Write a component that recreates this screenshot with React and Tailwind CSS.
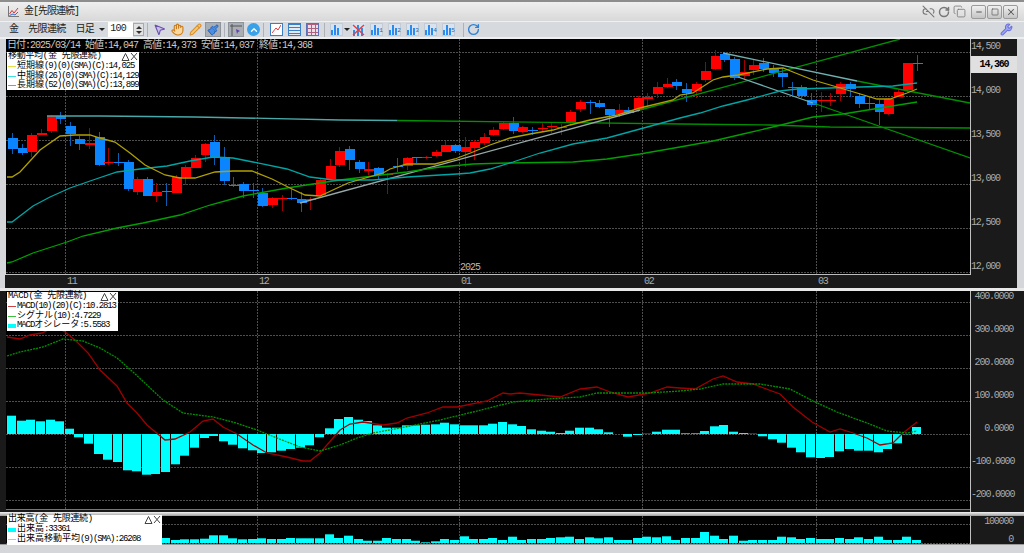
import { Hand, Pencil, Wrench, Copy, RotateCw, Minus, Square, X, Link2Off, ChevronUp, MousePointer2, Paintbrush } from "lucide-react";

const FONT = "font-['Liberation_Mono','Noto_Sans_CJK_JP',monospace]";

const barX = (i) => 12 + i * 9.628;

// [colour, body top, body bottom, wick top, wick bottom] in page pixels
const CANDLES = [
  ["b",138,149,133,154],["b",148,153,144,155],["r",135,152,133,157],["r",133,135,129,135],["r",116,131,115,133],
  ["b",116,119,112,124],["b",126,134,122,146],["b",139,144,136,150],["r",143,145,128,149],["b",137,165,132,166],
  ["r",162,163,148,165],["b",162,163,153,166],["b",162,189,160,191],["r",179,192,177,195],["b",179,196,177,196],
  ["r",192,196,183,202],["b",191,192,183,206],["r",177,193,175,193],["r",167,177,165,185],["r",158,168,155,168],
  ["r",144,155,143,162],["b",142,157,135,165],["b",157,181,147,185],["b",185,186,177,187],["b",184,191,182,198],
  ["b",190,191,183,198],["b",193,206,188,207],["r",198,205,197,208],["r",198,199,195,211],["b",198,199,189,200],
  ["b",199,203,192,212],["r",199,200,197,210],["r",180,195,179,197],["r",166,179,159,180],["r",151,165,147,167],
  ["b",149,160,146,170],["b",162,169,160,173],["r",169,171,162,175],["b",168,175,167,180],["r",174,175,173,194],
  ["b",166,167,158,172],["r",158,166,157,170],["b",157,158,157,163],["r",157,158,156,159],["r",152,156,150,157],
  ["r",145,152,141,152],["b",145,151,144,153],["r",147,152,137,167],["r",142,148,140,160],["r",137,143,133,145],
  ["r",130,135,127,136],["r",123,129,122,130],["b",123,131,117,134],["r",127,132,126,133],["b",130,131,127,135],
  ["r",128,129,123,132],["r",126,127,123,133],["r",127,128,124,135],["r",112,123,110,125],["r",102,109,100,112],
  ["b",102,103,100,114],["b",103,107,100,108],["b",109,115,109,127],["r",110,114,104,117],["b",110,113,107,114],
  ["r",98,110,96,112],["r",97,99,93,106],["r",87,94,82,98],["r",84,87,78,88],["b",82,86,79,90],
  ["b",89,93,83,102],["r",84,91,82,98],["r",71,80,62,82],["r",56,69,50,70],["b",54,60,52,62],
  ["b",59,78,57,80],["r",72,76,60,80],["r",65,70,59,75],["b",63,69,58,72],["b",69,73,65,77],
  ["b",73,77,68,87],["b",87,88,82,95],["b",87,96,85,98],["b",100,105,93,107],["r",100,101,92,112],
  ["r",100,101,93,106],["r",84,94,82,101],["b",84,89,82,97],["b",96,104,93,108],["b",103,104,97,109],
  ["b",104,112,100,125],["r",99,114,98,115],["r",92,97,90,97],["r",63,90,63,92],["b",63,64,55,71],
];

const MA_SHORT = "7,177 12,177 20,172 40,150 60,136 75,135 90,135 100,138 115,142 130,153 145,165 165,175 180,178 195,178 215,172 233,171 252,171 272,179 290,188 305,195 320,196 335,189 348,183 383,173 390,169 407,164 420,164 435,164 455,159 473,152 490,145 510,138 530,134 553,130 570,125 590,120 617,115 640,108 673,100 680,95 693,93 713,80 723,77 738,75 767,69 783,68 793,72 813,80 837,87 857,93 877,99 890,99 907,93 917,89";
const MA_MID = "7,222 12,222 33,206 50,197 70,188 93,180 117,172 140,169 167,166 190,161 213,157 233,158 253,162 287,169 310,177 333,180 373,180 407,177 440,175 457,174 470,173 490,169 513,162 540,153 573,144 607,138 640,129 680,118 700,113 723,106 747,100 780,91 797,89 830,88 860,87 893,86 917,83";
const MA_LONG = "7,263 12,262 33,253 67,242 83,236 117,228 143,223 180,215 210,205 243,196 287,188 313,184 340,180 373,176 407,172 440,167 473,164 507,163 573,162 607,159 640,154 680,147 713,141 743,134 777,126 813,117 843,114 880,108 917,102";

const MACD_LINE = "7,337 20,339 30,335 42,333 50,329 58,328 65,332 75,340 88,353 100,370 117,386 127,403 137,413 147,425 165,440 175,439 190,432 203,421 213,419 223,427 237,434 253,445 267,453 287,457 303,461 310,461 320,453 333,438 340,430 350,424 363,422 383,425 397,423 407,418 427,413 443,407 457,407 487,401 503,393 510,394 520,393 540,395 560,397 580,389 597,387 610,392 628,397 650,393 667,387 680,388 695,389 713,379 723,376 737,382 753,384 780,394 793,407 812,422 830,432 840,429 853,433 867,438 880,445 893,443 903,433 917,422";
const MACD_SIGNAL = "7,356 20,352 43,347 63,339 83,341 100,348 117,358 133,372 163,400 183,413 213,417 233,422 257,430 277,438 300,447 320,451 340,445 357,438 373,433 400,428 440,420 473,412 513,402 547,399 580,397 597,393 627,393 647,393 680,391 700,389 723,384 760,384 790,389 813,401 837,412 867,423 887,431 907,433 917,431";

const MACD_BARS = [18.3,13.3,14.3,12.7,14.3,12.7,5.3,-3.3,-9.7,-20,-25.7,-28,-36.3,-37.3,-40.7,-40,-38,-30.3,-21.7,-13.7,-4,-2,-7.3,-10.7,-14.3,-16.3,-19,-18.3,-16.7,-15,-13.7,-11.3,-3.3,5.7,15,17,14.3,13,8.7,6.3,6.3,8.7,8.7,9.3,9.7,11.3,9.7,8.7,8.7,8.7,10.3,12,9.7,8,4.7,3.3,2.3,1,3.3,6.3,6.3,4.7,1.7,0,-2.7,-1,0.3,2.3,4.3,4.3,0.7,0.7,3,7.7,9,2.3,1,0.3,-2.3,-5.3,-8.7,-13.7,-18.3,-23.3,-24,-23,-17.3,-15,-16.7,-16.7,-18.3,-15,-9.3,-0.3,7];

const VOLUME = [4,4,4,4,4,4,4,4,4,4,4,4,4,4,4,4,5,3,3.7,3.7,4.3,7.7,7.7,4.7,3.7,4,4.7,4,4,5,4.7,4.7,4.7,8.7,5,7.3,4,2.3,2.3,5,4,4,2.3,0.7,1.7,4,3,6.7,4,4,5,3,6.3,3,4,4,5,5.7,6.3,4,5.7,4.7,5.7,3,3,5,6.3,5.7,6.7,3,5,5,11,7.3,4,7.3,2.3,3,3,3,6.3,5.7,4,5,4,4,5,4,5.7,4,6.3,3,3,6.3,3];

const MONTHS = [65, 257, 459, 642, 816];

function Grid({ ys, top, bottom }) {
  return (
    <g stroke="#4e4e4e" strokeWidth="1" strokeDasharray="2 1">
      {ys.map((y) => <line key={y} x1="6" x2="970" y1={y + 0.5} y2={y + 0.5} />)}
      {MONTHS.map((x) => <line key={x} x1={x + 0.5} x2={x + 0.5} y1={top} y2={bottom} />)}
    </g>
  );
}

function PriceChart() {
  return (
    <svg className="block w-[964px] h-[235px]" viewBox="6 39 964 235">
      <Grid ys={[52, 96, 140, 184, 228, 272]} top={39} bottom={274} />
      {CANDLES.map(([c, t, b, wt, wb], i) => {
        const x = Math.round(barX(i));
        return (
          <g key={i}>
            <line x1={x + 0.5} x2={x + 0.5} y1={wt} y2={wb} stroke={c === "r" ? "#a00000" : "#0a5fb0"} />
            <rect x={x - 4} y={t} width="10" height={b - t} fill={c === "r" ? "#ff0000" : "#0a84ff"} />
          </g>
        );
      })}
      <g fill="none" strokeWidth="1.3">
        <polyline points="47,116 100,116 195,117 340,120 397,120.5" stroke="#4aa8a8" />
        <polyline points="397,120.5 573,122.7 680,124 770,125 830,127 970,128" stroke="#009000" />
        <polyline points="300,203 640,110" stroke="#98a8a8" />
        <polyline points="640,110 900,39" stroke="#009000" />
        <polyline points="723,53 857,81" stroke="#70b0b0" />
        <polyline points="857,81 970,103" stroke="#009000" />
        <polyline points="738,77 813,103" stroke="#70b0b0" />
        <polyline points="813,103 970,158" stroke="#009000" />
        <polyline points={MA_LONG} stroke="#00a000" />
        <polyline points={MA_MID} stroke="#00a5a5" />
        <polyline points={MA_SHORT} stroke="#b0a000" />
      </g>
    </svg>
  );
}

function MacdChart() {
  return (
    <svg className="block w-[964px] h-[218px]" viewBox="6 291 964 218">
      <Grid ys={[302, 335, 368, 401, 434, 467, 500]} top={291} bottom={509} />
      {MACD_BARS.map((v, i) => (
        <rect key={i} x={Math.round(barX(i)) - 5} y={v > 0 ? 434 - v : 434} width="9" height={Math.abs(v)} fill="#00ffff" />
      ))}
      <polyline points={MACD_LINE} fill="none" stroke="#a00000" strokeWidth="1.3" />
      <polyline points={MACD_SIGNAL} fill="none" stroke="#009000" strokeWidth="1.3" strokeDasharray="2 1" />
    </svg>
  );
}

function VolumeChart() {
  return (
    <svg className="block w-[964px] h-[28px]" viewBox="6 516 964 28">
      <Grid ys={[524, 543]} top={516} bottom={544} />
      {VOLUME.map((v, i) => (
        <rect key={i} x={Math.round(barX(i)) - 5} y={543 - v} width="9" height={v} fill="#00ffff" />
      ))}
    </svg>
  );
}

function LegendHead({ title }) {
  return (
    <div className="flex items-start h-[10px] text-[9px] tracking-[-0.3px] leading-[9px] whitespace-nowrap">
      <span>{title}</span>
      <svg width="17" height="9" viewBox="0 0 17 9" fill="none" stroke="#444" className="ml-auto">
        <path d="M1 8.5h7L4.5 1.5z" />
        <path d="M10 1l6 7M16 1l-6 7" />
      </svg>
    </div>
  );
}

const Narrow = ({ children }) => <span className="tracking-[-1.1px]">{children}</span>;

function LegendRow({ color, thick, children }) {
  return (
    <div className="flex items-center h-[9.6px] text-[9px] leading-[9.6px] whitespace-nowrap">
      <span
        className={`w-[8px] mr-[1px] shrink-0 ${thick ? "h-[4px]" : "h-[1px]"}`}
        style={{ background: color }}
      />
      <span>{children}</span>
    </div>
  );
}

function IconFrame({ children, active }) {
  return (
    <span className={`flex items-center justify-center w-[16px] h-[15px] shrink-0 ${active ? "bg-[#a9adb4] border border-[#8f949b]" : ""}`}>
      {children}
    </span>
  );
}

function BarIcon({ n }) {
  return (
    <span className="relative flex items-center justify-center w-[13px] h-[13px] shrink-0 bg-[#d9e3ef] border border-[#c3cbd6]">
      <svg width="11" height="11" viewBox="0 0 11 11" fill="#2a8cf0">
        <rect x="0" y="6" width="2" height="5" />
        <rect x="3" y="1" width="2" height="10" />
        <rect x="6" y="4" width="2" height="7" />
      </svg>
      <span className="absolute right-0 bottom-0 text-[6px] leading-[8px] text-[#2060b0]">{n}</span>
    </span>
  );
}

function Sep({ className = "" }) {
  return <span className={`w-[1px] h-[14px] bg-[#aeb2b8] mx-[3px] shrink-0 ${className}`} />;
}

function WinButton({ children }) {
  return (
    <span className="flex items-center justify-center w-[15px] h-[14px] rounded-[2px] border border-[#9a9a9a] bg-gradient-to-b from-[#f0f0f0] to-[#c4c4c4] text-[#555]">
      {children}
    </span>
  );
}

function TitleBar() {
  return (
    <div className="h-[21px] shrink-0 flex items-center pl-[8px] pr-[6px] border-t-2 border-[#8d8d8d] bg-gradient-to-b from-[#efefef] to-[#d8d8d8]">
      <svg width="11" height="11" viewBox="0 0 11 11" fill="none" className="mr-[5px]">
        <path d="M0.5 0v10.5H11" stroke="#777" />
        <path d="M1.5 8L4 4.5 6 7l4-5" stroke="#e03030" />
        <path d="M1.5 9.5L5 8l2 1 3-3" stroke="#3070e0" />
      </svg>
      <span className="text-[10px] tracking-[-1px] text-[#222]">金[先限連続]</span>
      <div className="ml-auto flex items-center text-[#777]">
        <Link2Off size={13} strokeWidth={2} />
        <RotateCw size={12} strokeWidth={3} className="ml-[3px]" />
        <Copy size={13} strokeWidth={1.5} className="ml-[3px] mr-[5px]" />
        <WinButton><Minus size={8} strokeWidth={3} /></WinButton>
        <span className="w-[1px]" />
        <WinButton><Square size={8} strokeWidth={2} /></WinButton>
        <span className="w-[1px]" />
        <WinButton><X size={10} strokeWidth={2.5} /></WinButton>
      </div>
    </div>
  );
}

function Toolbar() {
  return (
    <div className="h-[18px] shrink-0 flex items-center pl-[9px] pr-[11px] bg-[#d6d9de] border-t border-[#f0f0f0] border-b-2 border-b-[#eceef0] text-[10px] tracking-[-0.7px] text-[#222]">
      <span>金</span>
      <span className="ml-[10px]">先限連続</span>
      <span className="ml-[10px]">日足</span>
      <span className="ml-[5px] w-0 h-0 border-x-[3px] border-x-transparent border-t-[3px] border-t-[#222]" />
      <span className="ml-[3px] w-[25px] h-[15px] bg-white pl-[2px] leading-[14px]">100</span>
      <span className="w-[11px] h-[13px] flex flex-col items-center justify-center gap-[2px] bg-[#e2e2e2] border border-[#aaa]">
        <span className="w-0 h-0 border-x-[3px] border-x-transparent border-b-[3px] border-b-[#333]" />
        <span className="w-0 h-0 border-x-[3px] border-x-transparent border-t-[3px] border-t-[#333]" />
      </span>
      <Sep />
      <div className="flex items-center gap-[2px]">
        <IconFrame><MousePointer2 size={13} className="text-[#6a50b0] fill-[#c8c0e8]" /></IconFrame>
        <IconFrame><Hand size={13} className="text-[#c87818] fill-[#f8d8a0]" /></IconFrame>
        <IconFrame><Pencil size={13} className="text-[#d89030] fill-[#f8c870]" /></IconFrame>
        <IconFrame active><Paintbrush size={12} className="text-[#2060c0] fill-[#4a90e0]" /></IconFrame>
      </div>
      <Sep />
      <IconFrame active>
        <svg width="12" height="12" viewBox="0 0 12 12" fill="none">
          <path d="M2 0v12M0 2h12" stroke="#555" />
          <path d="M6 5l4 2-2 1-1 2z" fill="#6040b0" />
        </svg>
      </IconFrame>
      <span className="ml-[3px] flex items-center justify-center w-[13px] h-[13px] rounded-full bg-[#3aa0e8] text-white">
        <ChevronUp size={10} strokeWidth={3} />
      </span>
      <Sep />
      <div className="ml-[3px] flex items-center gap-[5px]">
        <span className="w-[13px] h-[13px] bg-white border border-[#3a80c8] flex items-center justify-center">
          <svg width="9" height="9" viewBox="0 0 9 9" fill="none"><path d="M0 8L4 3l2 2 3-5" stroke="#e04040" /></svg>
        </span>
        <span className="w-[13px] h-[13px] bg-[#e4e8f0] border border-[#3a80c8] bg-[linear-gradient(#3a80c8_1px,transparent_1px)] bg-[length:100%_3px]" />
        <span className="w-[13px] h-[13px] bg-[#e8e0e4] border border-[#5a70b8] bg-[linear-gradient(#b06080_1px,transparent_1px),linear-gradient(90deg,#b06080_1px,transparent_1px)] bg-[length:4px_4px]" />
      </div>
      <Sep className="ml-[5px] mr-[5px]" />
      <BarIcon n="" />
      <span className="ml-[1px] w-0 h-0 border-x-[3px] border-x-transparent border-t-[3px] border-t-[#222]" />
      <span className="relative ml-[2px] w-[13px] h-[13px] shrink-0 bg-[#d9e3ef]">
        <svg width="13" height="13" viewBox="0 0 13 13" fill="#2a8cf0">
          <rect x="1" y="7" width="2" height="6" />
          <rect x="5" y="2" width="2" height="11" />
          <rect x="9" y="5" width="2" height="8" />
          <path d="M1 2l11 10M12 2L1 12" stroke="#e84040" strokeWidth="1.5" />
        </svg>
      </span>
      <div className="ml-[5px] flex items-center gap-[5px]">
        {[1, 2, 3, 4, 5].map((n) => <BarIcon key={n} n={n} />)}
      </div>
      <Sep className="ml-[8px]" />
      <span className="text-[#2a80d8]">
        <RotateCw size={13} strokeWidth={2.5} />
      </span>
      <Wrench size={13} strokeWidth={2} className="ml-auto text-[#6a70e0] fill-[#a0a8f0]" />
    </div>
  );
}

export default function App() {
  return (
    <div className={`relative w-[1024px] h-[553px] overflow-hidden flex flex-col bg-[#d4d6da] ${FONT}`}>
      <TitleBar />
      <Toolbar />

      {/* price pane */}
      <div className="flex pl-[6px] pr-[7px] h-[236px] shrink-0">
        <div className="relative w-[964px] bg-black border-b border-[#bdbdbd]">
          <PriceChart />
          <div className="absolute left-[1px] top-0 h-[13px] leading-[13px] text-[10px] tracking-[-1px] text-[#c8c8c8] whitespace-nowrap">
            日付:2025/03/14 始値:14,047 高値:14,373 安値:14,037 終値:14,368
          </div>
          <div className="absolute left-[1px] top-[13px] w-[132px] h-[38px] bg-white text-black px-[1px] leading-none">
            <LegendHead title="移動平均(金 先限連続)" />
            <LegendRow color="#e8e040">短期線<Narrow>(9)(0)(SMA)(C):14,025</Narrow></LegendRow>
            <LegendRow color="#40e0e0">中期線<Narrow>(26)(0)(SMA)(C):14,129</Narrow></LegendRow>
            <LegendRow color="#30e030">長期線<Narrow>(52)(0)(SMA)(C):13,899</Narrow></LegendRow>
          </div>
          <span className="absolute left-[454px] top-[223px] text-[10px] tracking-[-1px] leading-[12px] text-[#bbb]">2025</span>
        </div>
        <div className="relative w-[47px] bg-[#1a1a1a] border-l border-[#c0c0c0] text-[10px] tracking-[-1.2px] text-[#aaa] pt-[1px]">
          {["14,500", "14,000", "13,500", "13,000", "12,500", "12,000"].map((p) => (
            <div key={p} className="h-[44px] leading-[13px]">{p}</div>
          ))}
          <div className="absolute inset-x-0 top-[17px] h-[17px] bg-[#e0e0e0] text-black font-bold text-center leading-[17px]">14,360</div>
        </div>
      </div>

      {/* date axis */}
      <div className="flex pl-[5px] pr-[7px] h-[13px] shrink-0 bg-[#d4d6da]">
        <div className="flex-1 flex bg-[#1a1a1a] text-[10px] tracking-[-1.2px] leading-[13px] text-[#aaa]">
          <span className="w-[61px]" />
          <span className="w-[192px] pl-[1px]">11</span>
          <span className="w-[202px] pl-[1px]">12</span>
          <span className="w-[183px] pl-[1px]">01</span>
          <span className="w-[174px] pl-[1px]">02</span>
          <span className="pl-[1px]">03</span>
        </div>
      </div>
      <div className="h-[3px] shrink-0 bg-[#e8e8e8]" />

      {/* macd pane */}
      <div className="flex pl-[6px] pr-[7px] h-[221px] shrink-0 bg-[#1a1a1a]">
        <div className="relative w-[964px] h-[219px] bg-black border-b border-[#777]">
          <MacdChart />
          <div className="absolute left-[1px] top-[1px] w-[111px] h-[39px] bg-white text-black px-[1px] leading-none">
            <LegendHead title="MACD(金 先限連続)" />
            <LegendRow color="#d04040"><Narrow>MACD(10)(20)(C):10.2813</Narrow></LegendRow>
            <LegendRow color="#40c040">シグナル<Narrow>(10):4.7229</Narrow></LegendRow>
            <LegendRow color="#00ffff" thick><Narrow>MACD</Narrow>オシレータ<Narrow>:5.5583</Narrow></LegendRow>
          </div>
        </div>
        <div className="w-[47px] border-l border-[#c0c0c0] text-[10px] tracking-[-1.2px] text-[#aaa] text-right pr-[4px]">
          {["400.0000", "300.0000", "200.0000", "100.0000", "0.0000", "-100.0000", "-200.0000"].map((v) => (
            <div key={v} className="h-[33px] leading-[11px]">{v}</div>
          ))}
        </div>
      </div>
      <div className="h-[4px] shrink-0 bg-gradient-to-b from-[#f4f4f4] to-[#9c9c9c]" />

      {/* volume pane */}
      <div className="flex pl-[6px] pr-[7px] h-[29px] shrink-0 bg-[#1a1a1a] border-b border-[#9a9a9a]">
        <div className="relative w-[964px] bg-black">
          <VolumeChart />
          <div className="absolute left-[1px] top-[-1px] w-[155px] h-[30px] bg-white text-black px-[1px] leading-none">
            <LegendHead title="出来高(金 先限連続)" />
            <LegendRow color="#00ffff" thick>出来高<Narrow>:33361</Narrow></LegendRow>
            <LegendRow color="#80f080">出来高移動平均<Narrow>(9)(SMA):26208</Narrow></LegendRow>
          </div>
        </div>
        <div className="w-[47px] border-l border-[#c0c0c0] text-[10px] tracking-[-1.2px] text-[#aaa] text-right pr-[4px]">
          <div className="h-[19px] leading-[11px]">100000</div>
          <div className="leading-[9px]">0</div>
        </div>
      </div>
    </div>
  );
}
